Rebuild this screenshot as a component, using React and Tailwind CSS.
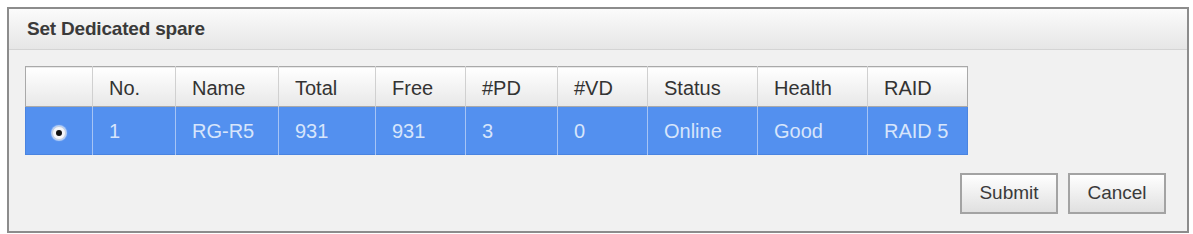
const cols = [
  { key: 'sel', label: '', w: 67 },
  { key: 'no', label: 'No.', w: 83 },
  { key: 'name', label: 'Name', w: 103 },
  { key: 'total', label: 'Total', w: 97 },
  { key: 'free', label: 'Free', w: 90 },
  { key: 'pd', label: '#PD', w: 92 },
  { key: 'vd', label: '#VD', w: 90 },
  { key: 'status', label: 'Status', w: 110 },
  { key: 'health', label: 'Health', w: 110 },
  { key: 'raid', label: 'RAID', w: 100 },
];

const row = { no: '1', name: 'RG-R5', total: '931', free: '931', pd: '3', vd: '0', status: 'Online', health: 'Good', raid: 'RAID 5' };

export default function App() {
  return (
    <div className="w-[1193px] h-[234px] bg-white pl-[7px] pt-[7px]" style={{ fontFamily: '"Liberation Sans", Arial, sans-serif' }}>
      <div className="w-[1182px] h-[226px] border-2 border-[#8c8c8c] bg-[#f1f1f1] flex flex-col">
        <div className="h-[41px] flex items-center px-[18px] bg-gradient-to-b from-[#fbfbfb] to-[#e6e6e6] border-b border-[#d4d4d4]">
          <span className="text-[19px] font-bold text-[#3a3a3a] tracking-[-0.2px]">Set Dedicated spare</span>
        </div>

        <div className="pl-[16px] pt-[16px]">
          <table className="border-collapse table-fixed">
            <thead>
              <tr className="h-[40px] bg-gradient-to-b from-white to-[#e8e8e8] border border-[#a9a9a9]">
                {cols.map((c) => (
                  <th
                    key={c.key}
                    style={{ width: c.w }}
                    className="border-r border-[#d0d0d0] last:border-r-[#a9a9a9] text-left font-normal text-[20px] text-[#333] pl-[16px] pt-[2px]"
                  >
                    {c.label}
                  </th>
                ))}
              </tr>
            </thead>
            <tbody>
              <tr className="h-[48px] bg-[#5390ef] border border-[#4a84e0]">
                <td className="border-r border-[#a6c4f5] text-center">
                  <span className="inline-flex items-center justify-center w-[14px] h-[14px] rounded-full bg-[#f4f6fa] border border-[#c4cfe0] shadow-[0_0_1px_1px_rgba(255,255,255,0.6)] mt-[2px]">
                    <span className="w-[6px] h-[6px] rounded-full bg-[#111]" />
                  </span>
                </td>
                {cols.slice(1).map((c) => (
                  <td key={c.key} className="border-r border-[#a6c4f5] last:border-r-[#4a84e0] text-[20px] text-[#d7e5fb] pl-[16px]">
                    {row[c.key]}
                  </td>
                ))}
              </tr>
            </tbody>
          </table>
        </div>

        <div className="flex justify-end gap-[10px] pr-[21px] pt-[18px]">
          <button className="w-[98px] h-[41px] border-2 border-[#a3a3a3] bg-gradient-to-b from-white to-[#e0e0e0] text-[19px] text-[#3a3a3a]">
            Submit
          </button>
          <button className="w-[98px] h-[41px] border-2 border-[#a3a3a3] bg-gradient-to-b from-white to-[#e0e0e0] text-[19px] text-[#3a3a3a]">
            Cancel
          </button>
        </div>
      </div>
    </div>
  );
}
